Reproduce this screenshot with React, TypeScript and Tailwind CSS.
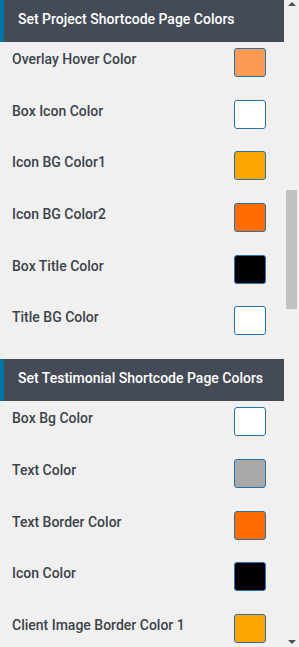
import React from 'react';

type Row = { label: string; color: string };

const sections: { title: string; rows: Row[] }[] = [
  {
    title: 'Set Project Shortcode Page Colors',
    rows: [
      { label: 'Overlay Hover Color', color: '#fd9b54' },
      { label: 'Box Icon Color', color: '#ffffff' },
      { label: 'Icon BG Color1', color: '#ffa500' },
      { label: 'Icon BG Color2', color: '#ff6c00' },
      { label: 'Box Title Color', color: '#000000' },
      { label: 'Title BG Color', color: '#ffffff' },
    ],
  },
  {
    title: 'Set Testimonial Shortcode Page Colors',
    rows: [
      { label: 'Box Bg Color', color: '#ffffff' },
      { label: 'Text Color', color: '#a9a9a9' },
      { label: 'Text Border Color', color: '#ff6c00' },
      { label: 'Icon Color', color: '#000000' },
      { label: 'Client Image Border Color 1', color: '#ffa500' },
    ],
  },
];

export default function App() {
  return (
    <div className="flex h-[647px] w-[299px] overflow-hidden bg-[#f0f0f1] font-['Roboto',sans-serif]">
      {/* Panel content */}
      <div className="w-[284px] shrink-0">
        {sections.map((s, i) => (
          <div key={s.title} className={i > 0 ? 'mt-[7px]' : ''}>
            <div className="flex h-[42px] items-center border-l-4 border-[#0073aa] bg-[#454b56] pb-[3px] pl-[14px] text-[14px] font-medium text-white">
              {s.title}
            </div>
            {s.rows.map((r) => (
              <div key={r.label} className="flex items-start justify-between pt-[6px] pb-[16.7px] pl-[12px] pr-[18px]">
                <span className="mt-[1px] text-[14px] leading-[20px] font-medium text-[#3c434a]">{r.label}</span>
                <div
                  className="h-[29px] w-[32px] rounded-[3px] border border-[#2271b1]"
                  style={{ backgroundColor: r.color }}
                />
              </div>
            ))}
          </div>
        ))}
      </div>

      {/* Scrollbar */}
      <div className="flex w-[15px] flex-col items-center bg-[#f1f1f1]">
        <svg width="8" height="5" viewBox="0 0 8 5" className="mt-[2px] ml-[1px]">
          <path d="M4 0 L8 4 L0 4 Z" fill="#505050" />
        </svg>
        <div className="mt-[183px] h-[119px] w-[11px] bg-[#c1c1c1]" />
        <div className="flex-1" />
        <svg width="8" height="5" viewBox="0 0 8 5" className="mb-[2px] ml-[1px]">
          <path d="M0 0 L8 0 L4 4 Z" fill="#505050" />
        </svg>
      </div>
    </div>
  );
}
